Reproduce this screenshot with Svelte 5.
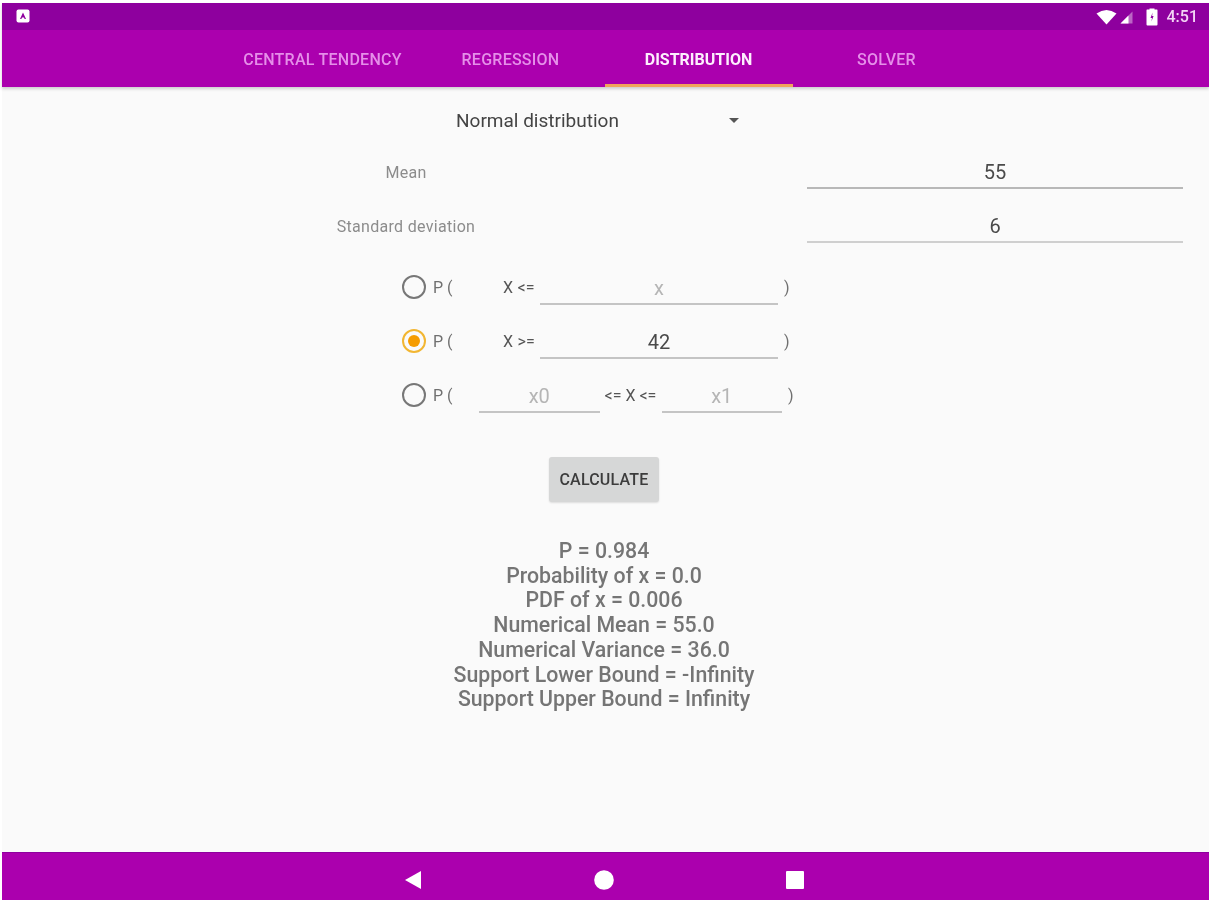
<script>
  const tabs = [
    { label: 'CENTRAL TENDENCY' },
    { label: 'REGRESSION' },
    { label: 'DISTRIBUTION', active: true },
    { label: 'SOLVER' }
  ];
  const results = [
    'P = 0.984',
    'Probability of x = 0.0',
    'PDF of x = 0.006',
    'Numerical Mean = 55.0',
    'Numerical Variance = 36.0',
    'Support Lower Bound = -Infinity',
    'Support Upper Bound = Infinity'
  ];
</script>

<div class="screen">
  <header class="appbar">
    <div class="status">
      <svg class="notif" width="14" height="14" viewBox="0 0 14 14">
        <rect width="13" height="13" x="0.5" y="0.5" rx="2" fill="#fff" />
        <path d="M7 3.5 L10 10 H8.6 L8 8.6 H6 L5.4 10 H4 Z" fill="#8e009e" />
      </svg>
      <div class="status-right">
        <svg width="22" height="16" viewBox="0 0 22 16"><path d="M0.5 4.5 Q10.500 -2.500 20.500 4.500 L10.500 15.500 Z" fill="#fff" /></svg>
        <svg class="cell" width="13" height="13" viewBox="0 0 13 13">
          <path d="M12.500 0.500 V12.500 H0.500 Z" fill="#fff" opacity="0.4" />
          <path d="M8.500 4.500 V12.500 H0.500 Z" fill="#fff" />
        </svg>
        <svg class="battery" width="12" height="18" viewBox="0 0 12 18">
          <path d="M3.500 1.500 V0.500 H8.500 V1.500 H11 Q11.500 1.500 11.500 2.500 V16.500 Q11.500 17.500 10.500 17.500 H1.500 Q0.500 17.500 0.500 16.500 V2.500 Q0.500 1.500 1 1.500 Z" fill="#fff" />
          <path d="M6.600 4.500 L4.500 10 H6 L5.400 13.500 L7.600 8 H6.100 Z" fill="#8e009e" />
        </svg>
        <span class="time">4:51</span>
      </div>
    </div>
    <nav class="tabs">
      {#each tabs as tab}
        <div class="tab" class:active={tab.active}>{tab.label}</div>
      {/each}
    </nav>
  </header>

  <main class="content">
    <div class="spinner">
      <span>Normal distribution</span>
      <i class="caret"></i>
    </div>

    <div class="param">
      <div class="param-label">Mean</div>
      <div class="field value param-field">55</div>
    </div>
    <div class="param">
      <div class="param-label">Standard deviation</div>
      <div class="field value param-field light">6</div>
    </div>

    <div class="options">
      <div class="option">
        <i class="radio"></i><span class="p">P (</span>
        <span class="rel single">X &lt;=</span>
        <div class="field hint wide">x</div>
        <span class="close">)</span>
      </div>
      <div class="option">
        <i class="radio on"></i><span class="p">P (</span>
        <span class="rel single">X &gt;=</span>
        <div class="field value wide">42</div>
        <span class="close">)</span>
      </div>
      <div class="option">
        <i class="radio"></i><span class="p">P (</span>
        <div class="field hint narrow first">x0</div>
        <span class="rel between">&lt;= X &lt;=</span>
        <div class="field hint narrow">x1</div>
        <span class="close">)</span>
      </div>
    </div>

    <button class="calc">CALCULATE</button>

    <div class="results">
      {#each results as line}
        <div>{line}</div>
      {/each}
    </div>
  </main>

  <footer class="navbar">
    <span class="slot"><svg width="20" height="20" viewBox="0 0 18 20"><path d="M17 1 V19 L1 10 Z" fill="#fff" /></svg></span>
    <span class="slot"><svg width="20" height="20" viewBox="0 0 20 20"><circle cx="10" cy="10" r="9.800" fill="#fff" /></svg></span>
    <span class="slot"><svg width="20" height="20" viewBox="0 0 20 20"><rect x="1" y="1" width="18" height="18" rx="1" fill="#fff" /></svg></span>
  </footer>
</div>

<style>
  :global(body) {
    margin: 0;
    background: #fff;
  }

  .screen {
    width: 1209px;
    height: 900px;
    box-sizing: border-box;
    padding: 3px 0 0 2px;
    display: flex;
    flex-direction: column;
    font-family: Roboto, "Liberation Sans", sans-serif;
    background: #fff;
    filter: blur(0.7px);
    overflow: hidden;
  }

  .appbar {
    height: 84px;
    flex: none;
    background: #ab00ae;
    box-shadow: 0 2px 3px rgba(0, 0, 0, 0.18);
    position: relative;
  }

  .status {
    height: 27px;
    background: #8e009e;
    display: flex;
    align-items: center;
    justify-content: space-between;
    padding: 0 11px 0 14px;
  }

  .notif {
    margin-top: -1px;
  }

  .status-right {
    display: flex;
    align-items: center;
  }

  .cell {
    margin-left: 2px;
    margin-top: 1px;
  }

  .battery {
    margin-left: 13px;
  }

  .time {
    margin-left: 9px;
    color: #f3d4f5;
    font-size: 16px;
    font-weight: 500;
  }

  .tabs {
    height: 57px;
    display: flex;
    justify-content: center;
    padding-right: 2px;
  }

  .tab {
    width: 188px;
    box-sizing: border-box;
    text-align: center;
    font-size: 16px;
    font-weight: 500;
    letter-spacing: 0.25px;
    line-height: 59px;
    color: #e58fe9;
  }

  .tab.active {
    color: #fdeefd;
    font-weight: 700;
    letter-spacing: 0;
    border-bottom: 3px solid #f0a45a;
  }

  .content {
    flex: 1;
    background: #fafafa;
    display: flex;
    flex-direction: column;
    min-height: 0;
  }

  .spinner {
    margin: 18px 0 0 454px;
    width: 286px;
    height: 30px;
    display: flex;
    align-items: center;
    justify-content: space-between;
    font-size: 19px;
    color: #444;
  }

  .caret {
    width: 0;
    height: 0;
    margin-right: 3px;
    border-left: 5px solid transparent;
    border-right: 5px solid transparent;
    border-top: 5px solid #555;
  }

  .param {
    margin-top: 21px;
    display: grid;
    grid-template-columns: 200px 376px;
    justify-content: start;
    column-gap: 301px;
    padding-left: 304px;
    height: 33px;
    align-items: center;
  }

  .param-label {
    text-align: center;
    font-size: 16px;
    letter-spacing: 0.3px;
    color: #8c8c8c;
  }

  .field {
    height: 33px;
    box-sizing: border-box;
    border-bottom: 2px solid #c4c4c4;
    text-align: center;
    font-size: 20px;
    line-height: 33px;
  }

  .field.value {
    color: #4a4a4a;
  }

  .field.hint {
    color: #b5b5b5;
  }

  .param-field {
    border-bottom-color: #b8b8b8;
  }

  .param-field.light {
    border-bottom-color: #cfcfcf;
  }

  .options {
    margin-top: 29px;
    margin-left: 400px;
    display: flex;
    flex-direction: column;
    gap: 21px;
  }

  .option {
    height: 33px;
    display: flex;
    align-items: center;
    font-size: 16px;
    color: #707070;
  }

  .radio {
    width: 24px;
    height: 24px;
    box-sizing: border-box;
    border: 2px solid #777;
    border-radius: 50%;
    flex: none;
    margin-bottom: 3px;
    display: flex;
    align-items: center;
    justify-content: center;
  }

  .radio.on {
    border-color: #f2b632;
  }

  .radio.on::after {
    content: "";
    width: 12px;
    height: 12px;
    border-radius: 50%;
    background: #f59c00;
  }

  .p {
    width: 48px;
    margin-left: 7px;
    flex: none;
    margin-bottom: 3px;
  }

  .rel {
    flex: none;
    color: #555;
    margin-bottom: 3px;
  }

  .rel.single {
    width: 37px;
    margin-left: 22px;
    letter-spacing: 0.2px;
  }

  .rel.between {
    width: 62px;
    text-align: center;
  }

  .wide {
    width: 238px;
  }

  .narrow {
    width: 120.500px;
  }

  .first {
    margin-left: -2px;
  }

  .close {
    margin-left: 6px;
    margin-bottom: 3px;
  }

  .calc {
    margin: 44px 0 0 547px;
    width: 110px;
    height: 45px;
    padding: 0;
    border: none;
    border-radius: 3px;
    background: #d6d7d7;
    box-shadow: 0 1px 2px rgba(0, 0, 0, 0.12);
    color: #3c3c3c;
    font-family: inherit;
    font-size: 16px;
    font-weight: 500;
    letter-spacing: 0.2px;
  }

  .results {
    margin-top: 37px;
    padding-right: 3px;
    text-align: center;
    font-size: 21.300px;
    font-weight: 500;
    line-height: 24.700px;
    color: #757575;
  }

  .navbar {
    height: 48px;
    box-sizing: border-box;
    flex: none;
    background: #ab00ae;
    border-top: 1px solid #8e009e;
    display: flex;
    align-items: center;
    justify-content: center;
    padding: 6px 3px 0 0;
  }

  .slot {
    width: 191px;
    display: flex;
    justify-content: center;
  }
</style>
